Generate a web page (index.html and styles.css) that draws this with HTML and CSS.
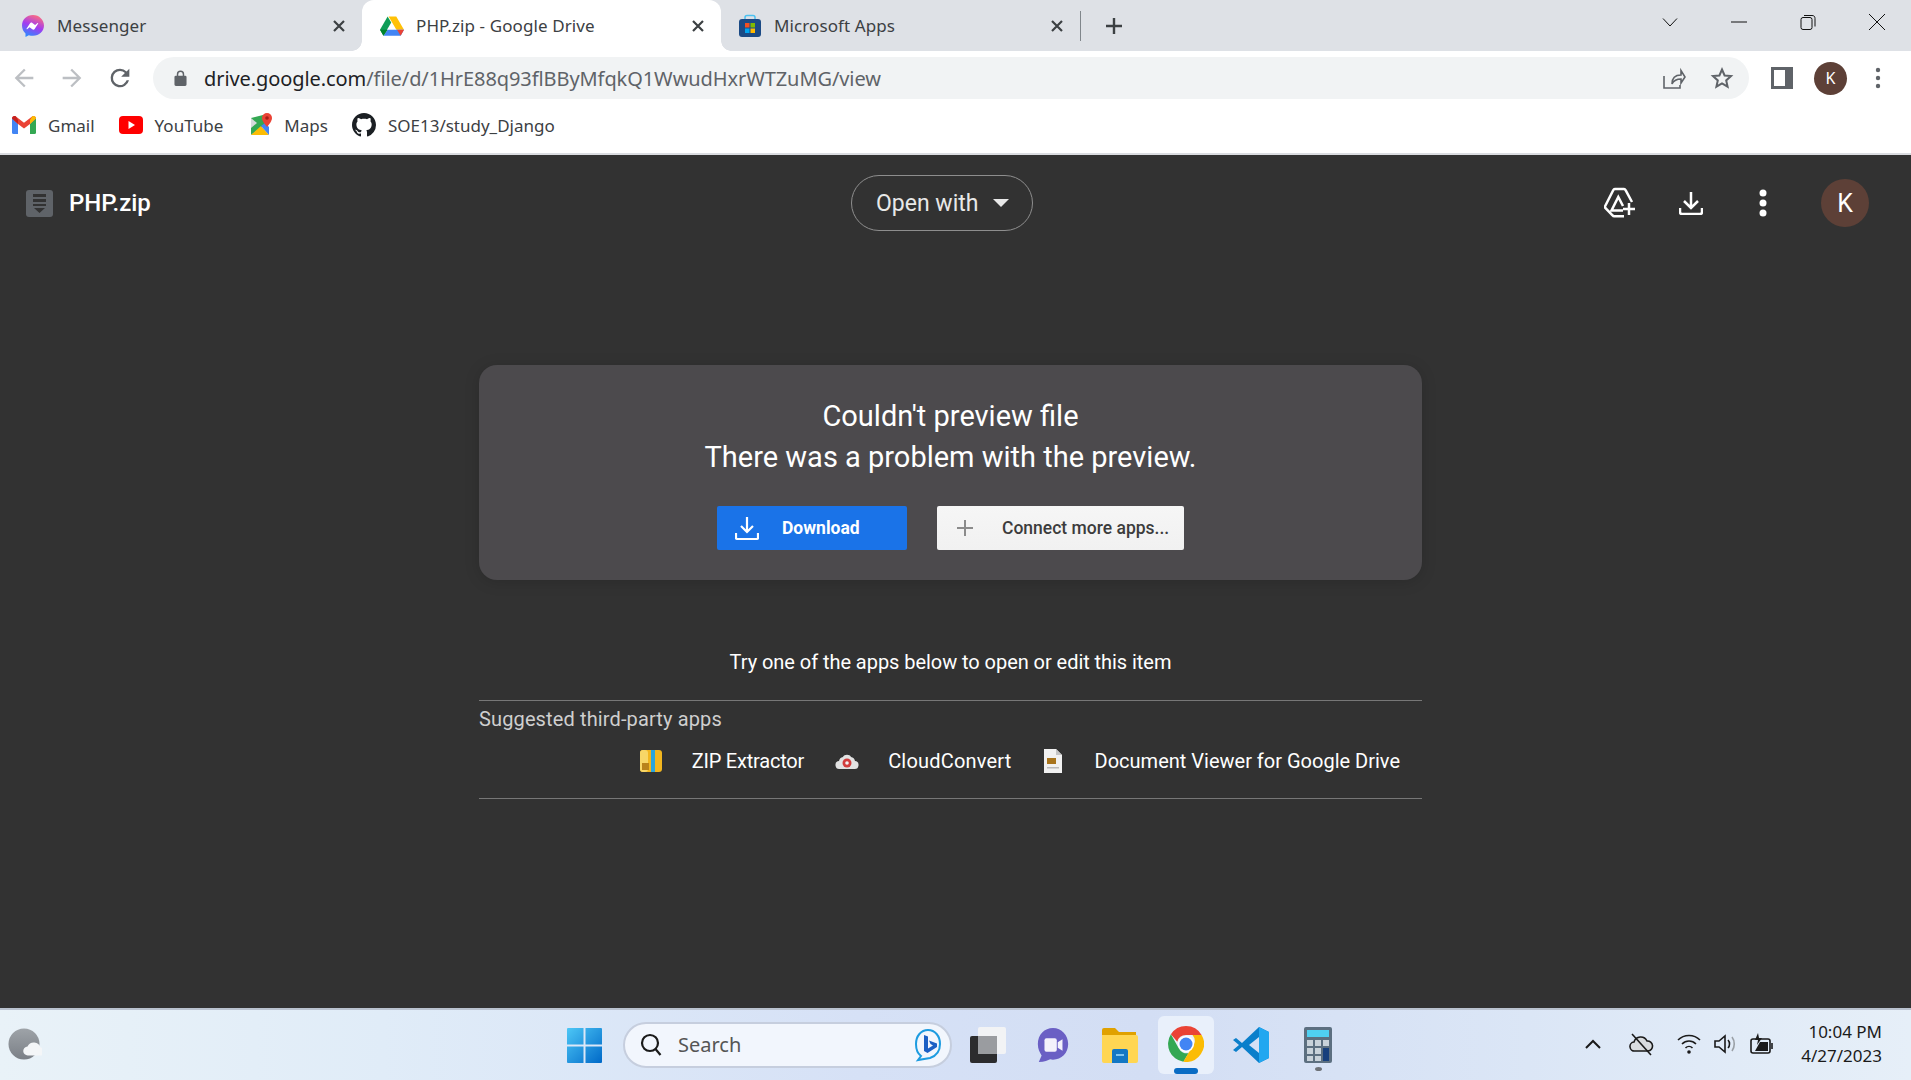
FILE: index.html
```html
<!DOCTYPE html>
<html lang="en">

<head>
    <meta charset="UTF-8">
    <title>PHP.zip - Google Drive</title>
    <link rel="stylesheet" href="styles.css">
</head>

<body>
    <!-- tabs -->
    <div class="tabstrip">
        <div class="tab">
            <svg class="favicon" viewBox="0 0 24 24">
                <defs>
                    <linearGradient id="msg" x1="0.3" y1="1" x2="0.7" y2="0">
                        <stop offset="0" stop-color="#2a8cff" />
                        <stop offset="0.5" stop-color="#a33bf0" />
                        <stop offset="1" stop-color="#ff6f7d" />
                    </linearGradient>
                </defs>
                <path fill="url(#msg)" d="M12 1C5.8 1 1 5.5 1 11.6c0 3.2 1.3 6 3.500 7.900V23l3.300-1.800c1.300.4 2.700.6 4.200.6 6.200 0 11-4.500 11-10.200S18.200 1 12 1z" />
                <path fill="#fff" d="M5.500 14.800l3.400-5.400c.5-.9 1.700-1.100 2.500-.5l2.700 2 2.500-1.900c.3-.3.8.1.6.4l-3.400 5.400c-.5.9-1.700 1.100-2.500.5l-2.700-2-2.500 1.900c-.3.300-.8-.1-.6-.4z" />
            </svg>
            <span class="tab-title">Messenger</span>
            <svg class="tab-close" viewBox="0 0 12 12"><path d="M1 1l10 10M11 1L1 11" /></svg>
        </div>
        <div class="tab tab-active">
            <svg class="favicon" viewBox="1 1 22 20.500">
                <path fill="#0f9d58" d="M8 2.500L1 14.700l3.200 5.600 7.100-12.200z" />
                <path fill="#ffc107" d="M8 2.500h7.900l7.100 12.200h-7l-7.100-12.200z" />
                <path fill="#4285f4" d="M4.200 20.300h15.700l3.100-5.600H8z" />
                <path fill="#ea4335" d="M19.900 20.300l3.100-5.600h-6.400z" />
                <path fill="#00832d" d="M4.200 20.300L8 14.700H1z" />
            </svg>
            <span class="tab-title">PHP.zip - Google Drive</span>
            <svg class="tab-close" viewBox="0 0 12 12"><path d="M1 1l10 10M11 1L1 11" /></svg>
        </div>
        <div class="tab tab-last">
            <svg class="favicon" viewBox="0 0 24 24">
                <path fill="none" stroke="#4cc2f1" stroke-width="1.500" d="M7 6V3.500C7 2 8 1.500 9 1.500h6c1 0 2 .5 2 2V6" />
                <rect x="1" y="5" width="22" height="18" rx="3" fill="#1b4a85" />
                <rect x="7" y="9" width="4.500" height="4.500" fill="#f25022" />
                <rect x="12.500" y="9" width="4.500" height="4.500" fill="#7fba00" />
                <rect x="7" y="14.500" width="4.500" height="4.500" fill="#00a4ef" />
                <rect x="12.500" y="14.500" width="4.500" height="4.500" fill="#ffb900" />
            </svg>
            <span class="tab-title">Microsoft Apps</span>
            <svg class="tab-close" viewBox="0 0 12 12"><path d="M1 1l10 10M11 1L1 11" /></svg>
        </div>
        <div class="tab-sep"></div>
        <svg class="new-tab" viewBox="0 0 18 18"><path d="M9 1v16M1 9h16" /></svg>
        <div class="win-controls">
            <svg class="win-btn" viewBox="0 0 16 16"><path d="M1 4.500l7 7.500 7-7.500" /></svg>
            <svg class="win-btn" viewBox="0 0 16 16"><path d="M0 8h16" /></svg>
            <svg class="win-btn" viewBox="0 0 16 16"><rect x="1" y="3.500" width="11" height="12" rx="2" /><path d="M4 1.500h8c2 0 3 1 3 3v8" /></svg>
            <svg class="win-btn" viewBox="0 0 16 16"><path d="M0 0l16 16M16 0L0 16" /></svg>
        </div>
    </div>

    <!-- address bar -->
    <div class="toolbar">
        <svg class="nav-icon nav-back" viewBox="0 0 24 24"><path fill="#bcbfc3" d="M20 11H7.800l5.600-5.600L12 4l-8 8 8 8 1.400-1.400L7.800 13H20z" /></svg>
        <svg class="nav-icon nav-fwd" viewBox="0 0 24 24"><path fill="#bcbfc3" d="M4 11h12.200l-5.600-5.600L12 4l8 8-8 8-1.400-1.400 5.600-5.600H4z" /></svg>
        <svg class="nav-icon nav-reload" viewBox="0 0 24 24"><path fill="#5f6368" d="M17.650 6.350A7.960 7.960 0 0 0 12 4a8 8 0 1 0 7.730 10h-2.080A6 6 0 1 1 12 6c1.660 0 3.140.69 4.220 1.780L13 11h7V4z" /></svg>
        <div class="omnibox">
            <svg class="lock" viewBox="0 0 14 18"><path fill="#5f6368" d="M12 6h-1V4.500a4 4 0 0 0-8 0V6H2a1.500 1.500 0 0 0-1.500 1.500v8A1.500 1.500 0 0 0 2 17h10a1.500 1.500 0 0 0 1.500-1.500v-8A1.500 1.500 0 0 0 12 6zM4.600 6V4.500a2.400 2.400 0 0 1 4.800 0V6z" /></svg>
            <span class="url"><span class="url-host">drive.google.com</span>/file/d/1HrE88q93flBByMfqkQ1WwudHxrWTZuMG/view</span>
            <svg class="omni-icon omni-share" viewBox="0 0 24 24"><path fill="none" stroke="#5f6368" stroke-width="1.600" d="M2 10v12h16v-3M10 18c0-6 3-9 9-9V4.500l4 6.500-4 6v-4c-4 0-7 1-9 5z" /></svg>
            <svg class="omni-icon omni-star" viewBox="0 0 24 24"><path fill="none" stroke="#5f6368" stroke-width="2" d="M12 3.500l2.600 6 6.400.6-4.800 4.300 1.400 6.300-5.600-3.300-5.600 3.300 1.400-6.300L3 10.100l6.400-.6z" /></svg>
        </div>
        <svg class="side-panel" viewBox="0 0 22 22"><rect width="22" height="22" fill="#5f6368" /><rect x="3" y="3" width="11" height="16" fill="#fff" /></svg>
        <div class="chrome-avatar">K</div>
        <svg class="chrome-menu" viewBox="0 0 6 22"><circle cx="3" cy="3" r="2.200" /><circle cx="3" cy="11" r="2.200" /><circle cx="3" cy="19" r="2.200" /></svg>
    </div>

    <!-- bookmarks -->
    <div class="bookmarks">
        <div class="bookmark bm-gmail">
            <svg class="bm-icon" viewBox="0 0 24 18">
                <path fill="#4285f4" d="M0 2v14.500A1.500 1.500 0 0 0 1.500 18H6V8z" />
                <path fill="#34a853" d="M24 2v14.500a1.500 1.500 0 0 1-1.500 1.500H18V8z" />
                <path fill="#ea4335" d="M0 2.500C0 .5 2.300-.6 3.900.6L12 6.800 20.100.6C21.700-.6 24 .5 24 2.500L18 8l-6 4.500L6 8z" />
                <path fill="#c5221f" d="M0 2.500L6 8V4L3.900.6C2.300-.6 0 .5 0 2.500z" />
                <path fill="#fbbc04" d="M24 2.500L18 8V4L20.100.6c1.600-1.200 3.900-.1 3.900 1.900z" />
            </svg>
            <span>Gmail</span>
        </div>
        <div class="bookmark bm-yt">
            <svg class="bm-icon" viewBox="0 0 24 18"><rect width="24" height="18" rx="4" fill="#f00" /><path fill="#fff" d="M9.500 5l6.500 4-6.500 4z" /></svg>
            <span>YouTube</span>
        </div>
        <div class="bookmark bm-maps">
            <svg class="bm-icon bm-tall" viewBox="0 0 24 24">
                <path fill="#34a853" d="M2 5l12-3 4 8L2 22z" />
                <path fill="#fbbc04" d="M2 22l10-9 8 9z" />
                <path fill="#4285f4" d="M12 13l4-3 4 4v8z" />
                <path fill="#d7dadd" d="M2 5l6 5-6 5z" />
                <path fill="#ea4335" d="M18 0a5 5 0 0 0-5 5c0 3.500 5 9 5 9s5-5.500 5-9a5 5 0 0 0-5-5z" />
                <circle cx="18" cy="5" r="1.800" fill="#a61c14" />
            </svg>
            <span>Maps</span>
        </div>
        <div class="bookmark bm-gh">
            <svg class="bm-icon bm-tall" viewBox="0 0 16 16"><path fill="#1b1f23" d="M8 0C3.580 0 0 3.580 0 8c0 3.540 2.290 6.530 5.470 7.590.4.070.55-.17.55-.38 0-.19-.01-.82-.01-1.490-2.010.37-2.530-.49-2.690-.94-.09-.23-.48-.94-.82-1.130-.28-.15-.68-.52-.01-.53.63-.01 1.080.58 1.230.82.72 1.210 1.870.87 2.330.66.070-.52.28-.87.51-1.070-1.780-.2-3.640-.89-3.640-3.950 0-.87.31-1.590.82-2.150-.08-.2-.36-1.020.08-2.120 0 0 .67-.21 2.200.82.64-.18 1.320-.27 2-.27.68 0 1.360.09 2 .27 1.530-1.040 2.200-.82 2.200-.82.44 1.100.16 1.920.08 2.120.51.56.82 1.270.82 2.150 0 3.070-1.870 3.750-3.650 3.950.29.25.54.73.54 1.480 0 1.070-.01 1.930-.01 2.200 0 .21.15.46.55.38A8.013 8.013 0 0 0 16 8c0-4.420-3.580-8-8-8z" /></svg>
            <span>SOE13/study_Django</span>
        </div>
    </div>

    <!-- drive preview -->
    <div class="viewer">
        <div class="viewer-header">
            <div class="file-name">
                <svg class="zip-icon" viewBox="0 0 27 27">
                    <rect width="27" height="27" rx="3" fill="#5f6368" />
                    <path fill="#323232" d="M7 4h13v3H7zM7 9h13v3H7zM7 14h13v2H7zM8 18h11l-5.500 5z" />
                </svg>
                <span>PHP.zip</span>
            </div>
            <div class="open-with">
                <span>Open with</span>
                <span class="caret"></span>
            </div>
            <div class="viewer-actions">
                <svg class="action add-drive" viewBox="0 0 32 32"><path d="M28 15L21.600 3.200Q21 2 20 2H10.800Q9.800 2 9.200 3.200L1.200 19Q.6 20.200 1.300 21L8.500 28.300Q9.200 29.300 10.200 29.300H20" /><path d="M19 19l-4.700-9-6.800 13.500H19" /><path d="M25 16v12M19 22h12" /></svg>
                <svg class="action dl" viewBox="0 0 24 24"><path d="M12 1v15M5 10l7 7 7-7M1 17v4a2 2 0 0 0 2 2h18a2 2 0 0 0 2-2v-4" /></svg>
                <svg class="action dots" viewBox="0 0 8 28"><circle cx="4" cy="4" r="3.500" /><circle cx="4" cy="14" r="3.500" /><circle cx="4" cy="24" r="3.500" /></svg>
                <div class="drive-avatar">K</div>
            </div>
        </div>

        <div class="preview">
            <div class="error-card">
                <div class="error-title">Couldn't preview file</div>
                <div class="error-title">There was a problem with the preview.</div>
                <div class="error-buttons">
                    <div class="btn btn-primary">
                        <svg class="btn-icon" viewBox="0 0 24 24"><path d="M12 1v15M6 10l6 6 6-6M1 17v5a1 1 0 0 0 1 1h20a1 1 0 0 0 1-1v-5" /></svg>
                        <span>Download</span>
                    </div>
                    <div class="btn btn-light">
                        <svg class="btn-icon" viewBox="0 0 18 18"><path d="M9 1v16M1 9h16" /></svg>
                        <span>Connect more apps...</span>
                    </div>
                </div>
            </div>

            <div class="try-text">Try one of the apps below to open or edit this item</div>

            <div class="suggested">
                <div class="suggested-title">Suggested third-party apps</div>
                <div class="app-row">
                    <div class="app app-zip">
                        <svg class="app-icon" viewBox="0 0 24 24">
                            <rect x="1" y="1" width="22" height="22" rx="3" fill="#f2b61f" />
                            <rect x="1" y="1" width="8" height="22" rx="3" fill="#f7d667" />
                            <rect x="12" y="1" width="4" height="22" fill="#2aa5dc" />
                            <rect x="3" y="14" width="7" height="7" fill="#b9821a" />
                        </svg>
                        <span>ZIP Extractor</span>
                    </div>
                    <div class="app app-cloud">
                        <svg class="app-icon" viewBox="0 0 24 24">
                            <path fill="#e2e2e2" d="M5 20a4 4 0 0 1-1-8 5 5 0 0 1 4-4c1-3 7-3 8 0a5 5 0 0 1 4 4 4 4 0 0 1-1 8z" />
                            <circle cx="12" cy="14" r="4.500" fill="#d23c3c" />
                            <circle cx="12" cy="14" r="1.800" fill="#f3f3f3" />
                        </svg>
                        <span>CloudConvert</span>
                    </div>
                    <div class="app app-doc">
                        <svg class="app-icon app-doc-icon" viewBox="0 0 18 24">
                            <path fill="#f1f1f1" d="M0 0h12l6 6v18H0z" />
                            <path fill="#c4c4c4" d="M12 0l6 6h-6z" />
                            <rect x="3" y="9" width="9" height="6" fill="#a8741c" />
                            <rect x="3" y="18" width="12" height="1.500" fill="#b9b9b9" />
                        </svg>
                        <span>Document Viewer for Google Drive</span>
                    </div>
                </div>
            </div>
        </div>
    </div>

    <!-- windows taskbar -->
    <div class="taskbar">
        <div class="tb-left">
            <svg class="weather" viewBox="0 0 34 34">
                <defs>
                    <linearGradient id="wthr" x1="0" y1="0" x2="0" y2="1">
                        <stop offset="0" stop-color="#9ea3a8" />
                        <stop offset="1" stop-color="#7b8087" />
                    </linearGradient>
                </defs>
                <circle cx="16" cy="16" r="15.500" fill="url(#wthr)" />
                <path fill="#f4f6f8" d="M20 27.500a4.500 4.500 0 0 1-.5-9 7 7 0 0 1 13 1 4 4 0 0 1 0 8z" />
            </svg>
        </div>
        <div class="tb-center">
            <svg class="win-logo" viewBox="0 0 35 35">
                <defs>
                    <linearGradient id="winb" x1="0" y1="0" x2="1" y2="1">
                        <stop offset="0" stop-color="#4dc7f6" />
                        <stop offset="1" stop-color="#0069c8" />
                    </linearGradient>
                </defs>
                <path fill="url(#winb)" d="M0 1a1 1 0 0 1 1-1h15.500v16.500H0zM18.500 0H34a1 1 0 0 1 1 1v15.500H18.500zM0 18.500h16.500V35H1a1 1 0 0 1-1-1zM18.500 18.500H35V34a1 1 0 0 1-1 1H18.500z" />
            </svg>
            <div class="search-pill">
                <svg class="search-glass" viewBox="0 0 22 24"><circle cx="10" cy="10" r="8" /><path d="M15.500 16l5 6" /></svg>
                <span class="search-text">Search</span>
                <svg class="bing" viewBox="0 0 28 34">
                    <path fill="none" stroke="#1c9be0" stroke-width="2" d="M14 2c7 0 12 6 12 14s-4 12-10 14l-12 2 3-4C3 25 2 21 2 16 2 8 7 2 14 2z" />
                    <path fill="#1b5fc4" d="M10 7l4 1.500v12l5-3-2.500-1.500-1.500-3.500 8 3v3.500l-9.500 6-3.500-2z" />
                </svg>
            </div>
            <svg class="tb-icon taskview" viewBox="0 0 36 36">
                <rect x="8" y="0" width="28" height="27" rx="2" fill="#f2f3f5" />
                <rect x="0" y="9" width="27" height="27" rx="2" fill="#2c2c2e" />
                <rect x="8" y="9" width="19" height="18" fill="#9a9ca0" />
            </svg>
            <svg class="tb-icon teams" viewBox="0 0 34 38">
                <path fill="#6a5fc4" d="M17 1C8 1 1 8 1 18c0 5 2 9 4 12l-3 7c6 0 10-2 12-3 1 0 2 .5 3 .5 9 0 16-7 16-16.500S26 1 17 1z" />
                <rect x="8" y="12" width="13" height="14" rx="2" fill="#f3f1fb" />
                <path fill="#f3f1fb" d="M22 16l5-3v12l-5-3z" />
            </svg>
            <svg class="tb-icon folder" viewBox="0 0 36 36">
                <path fill="#e0a100" d="M0 3a2 2 0 0 1 2-2h11l4 4h17v8H0z" />
                <path fill="#ffd653" d="M0 8h34a2 2 0 0 1 2 2v24a2 2 0 0 1-2 2H2a2 2 0 0 1-2-2z" />
                <path fill="#1277c4" d="M10 24a2 2 0 0 1 2-2h12a2 2 0 0 1 2 2v12H10z" />
                <rect x="14" y="27" width="8" height="2" fill="#7dc3ef" />
            </svg>
            <div class="tb-active">
                <svg class="chrome-logo" viewBox="0 0 36 36">
                    <path fill="#ea4335" d="M18 0a18 18 0 0 1 15.600 9H18a9 9 0 0 0-8.700 6.700L2.900 8.300A18 18 0 0 1 18 0z" />
                    <path fill="#34a853" d="M2.900 8.300l7.800 14a9 9 0 0 0 10 4.800L15.400 35.800A18 18 0 0 1 2.900 8.300z" />
                    <path fill="#fbbc04" d="M33.600 9A18 18 0 0 1 15.400 35.800l7.800-13.600A9 9 0 0 0 24.500 9z" />
                    <circle cx="18" cy="18" r="8" fill="#fff" />
                    <circle cx="18" cy="18" r="6.500" fill="#4285f4" />
                </svg>
                <div class="tb-indicator"></div>
            </div>
            <svg class="tb-icon vscode" viewBox="0 0 36 36">
                <path fill="#0a7fcb" d="M26 0l10 5v26l-10 5L9 20l-6 5-3-2 6-5-6-5 3-2 6 5z" />
                <path fill="#22a7f0" d="M26 0l10 5v26l-10 5z" />
                <path fill="#d5e1f6" d="M26 10v16l-10-8z" />
            </svg>
            <div class="tb-calc">
                <svg class="calc-icon" viewBox="0 0 28 36">
                    <rect width="28" height="36" rx="2" fill="#5c6f80" />
                    <rect x="3" y="3" width="22" height="7" fill="#4fd0f2" />
                    <g fill="#c8d2da">
                        <rect x="3" y="13" width="6" height="6" /><rect x="11" y="13" width="6" height="6" /><rect x="19" y="13" width="6" height="6" />
                        <rect x="3" y="21" width="6" height="6" /><rect x="11" y="21" width="6" height="6" />
                        <rect x="3" y="29" width="6" height="5" /><rect x="11" y="29" width="6" height="5" />
                    </g>
                    <rect x="19" y="21" width="6" height="13" fill="#173f7c" />
                </svg>
                <div class="tb-dot"></div>
            </div>
        </div>
        <div class="tray">
            <svg class="tray-icon tray-chevron" viewBox="0 0 16 10"><path d="M1 9l7-7 7 7" /></svg>
            <svg class="tray-icon tray-cloud" viewBox="0 0 25 24"><path d="M6 19a4.500 4.500 0 0 1-1-9 7 7 0 0 1 13-1 5 5 0 0 1 1 10z" fill="#d9dcdf" /><path d="M3 2l19 21" /></svg>
            <svg class="tray-icon tray-wifi" viewBox="0 0 24 22"><path d="M1 7c6-6 16-6 22 0M5 11c4-4 10-4 14 0M8.500 15c2-2 5-2 7 0" /><circle cx="12" cy="19" r="1.800" fill="#1a1a1a" stroke="none" /></svg>
            <svg class="tray-icon tray-sound" viewBox="0 0 24 24"><path d="M2 9v6h4l6 5V4L6 9z" /><path d="M15 8c2 2 2 6 0 8" /><path class="faint" d="M19 5c3 4 3 10 0 14" /></svg>
            <svg class="tray-icon tray-battery" viewBox="0 0 24 24"><rect x="1" y="7" width="19" height="14" rx="2" /><path d="M22 11v6" /><path fill="#1a1a1a" stroke="none" d="M10 10h8v9H5zM8 1L5 8h3l-1 5 5-7H9z" /></svg>
            <div class="clock">
                <div>10:04 PM</div>
                <div>4/27/2023</div>
            </div>
        </div>
    </div>
</body>

</html>
```

FILE: styles.css
```css
* {
    box-sizing: border-box;
}

html,
body {
    margin: 0;
    height: 100%;
}

body {
    width: 1911px;
    height: 1080px;
    overflow: hidden;
    display: flex;
    flex-direction: column;
    font-family: 'Noto Sans', sans-serif;
    background-color: #323232;
}

svg {
    display: block;
    flex-shrink: 0;
}

/* tab strip */
.tabstrip {
    height: 51px;
    background-color: #dee1e6;
    display: flex;
    align-items: center;
}

.tab {
    width: 362px;
    height: 51px;
    display: flex;
    align-items: center;
    padding-left: 21px;
    position: relative;
}

.tab-active {
    width: 359px;
    background-color: #fff;
    border-radius: 12px 12px 0 0;
    padding-left: 18px;
}

.tab-active::before,
.tab-active::after {
    content: "";
    position: absolute;
    bottom: 0;
    width: 10px;
    height: 10px;
    background: radial-gradient(circle at 0 0, #dee1e6 9.5px, #fff 10px);
}

.tab-active::before {
    left: -10px;
}

.tab-active::after {
    right: -10px;
    background: radial-gradient(circle at 100% 0, #dee1e6 9.5px, #fff 10px);
}

.tab-last {
    width: 359px;
    padding-left: 17px;
}

.favicon {
    width: 24px;
    height: 24px;
}

.tab-title {
    font-size: 17px;
    color: #3c4043;
    margin-left: 12px;
    flex: 1;
    letter-spacing: 0.1px;
}

.tab-close {
    width: 12px;
    height: 12px;
    margin-right: 17px;
    fill: none;
    stroke: #3c4043;
    stroke-width: 2.200;
}

.tab-sep {
    width: 1px;
    height: 30px;
    background-color: #80868b;
}

.new-tab {
    width: 18px;
    height: 18px;
    margin-left: 24px;
    fill: none;
    stroke: #3c4043;
    stroke-width: 2.400;
}

.win-controls {
    margin-left: auto;
    display: flex;
    align-items: center;
    gap: 53px;
    padding-right: 26px;
    margin-top: -7px;
}

.win-btn {
    width: 16px;
    height: 16px;
    fill: none;
    stroke: #111;
    stroke-width: 1;
}

/* toolbar */
.toolbar {
    height: 51px;
    background-color: #fff;
    display: flex;
    align-items: center;
}

.nav-icon {
    width: 28px;
    height: 28px;
    margin-top: 2px;
}

.nav-back {
    margin-left: 10px;
}

.nav-fwd {
    margin-left: 20px;
}

.nav-reload {
    margin-left: 20px;
}

.omnibox {
    width: 1596px;
    height: 42px;
    margin-left: 19px;
    margin-top: 3px;
    background-color: #f1f3f4;
    border-radius: 21px;
    display: flex;
    align-items: center;
    padding-left: 21px;
}

.lock {
    width: 13px;
    height: 17px;
}

.url {
    margin-left: 17px;
    font-size: 20px;
    color: #5f6368;
    letter-spacing: -0.08px;
}

.url-host {
    color: #202124;
}

.omni-icon {
    width: 24px;
    height: 24px;
}

.omni-share {
    margin-left: auto;
}

.omni-star {
    margin-left: 24px;
    margin-right: 15px;
}

.side-panel {
    width: 22px;
    height: 22px;
    margin-left: 22px;
    margin-top: 3px;
}

.chrome-avatar {
    width: 33px;
    height: 33px;
    margin-left: 21px;
    margin-top: 3px;
    border-radius: 50%;
    background-color: #5d4037;
    color: #fff;
    font-size: 16px;
    display: flex;
    align-items: center;
    justify-content: center;
}

.chrome-menu {
    width: 6px;
    height: 22px;
    margin-left: 28px;
    margin-top: 3px;
    fill: #5f6368;
}

/* bookmarks */
.bookmarks {
    height: 53px;
    background-color: #fff;
    border-bottom: 2px solid #dadce0;
    display: flex;
    align-items: center;
    padding: 0 0 5px 12px;
}

.bookmark {
    display: flex;
    align-items: center;
    font-size: 17px;
    color: #3c4043;
}

.bm-icon {
    width: 24px;
    height: 18px;
}

.bm-tall {
    height: 24px;
}

.bookmark span {
    margin-left: 12px;
}

.bm-yt {
    margin-left: 24px;
}

.bm-maps {
    margin-left: 26px;
}

.bm-maps span {
    margin-left: 11px;
}

.bm-gh {
    margin-left: 24px;
}

/* drive viewer */
.viewer {
    flex: 1;
    background-color: #323232;
    font-family: Roboto, sans-serif;
}

.viewer-header {
    height: 96px;
    display: grid;
    grid-template-columns: 851px 182px 1fr;
    align-items: center;
}

.file-name {
    display: flex;
    align-items: center;
    padding-left: 26px;
    font-size: 24px;
    font-weight: 500;
    color: #fff;
}

.zip-icon {
    width: 27px;
    height: 27px;
    margin-right: 16px;
}

.open-with {
    height: 56px;
    border: 1px solid #8e8e8e;
    border-radius: 28px;
    display: flex;
    align-items: center;
    padding-left: 24px;
    font-size: 23px;
    color: #e8e8e8;
}

.caret {
    width: 0;
    height: 0;
    margin-left: 15px;
    border-left: 8px solid transparent;
    border-right: 8px solid transparent;
    border-top: 8px solid #e8e8e8;
}

.viewer-actions {
    display: flex;
    align-items: center;
}

.action {
    fill: none;
    stroke: #fff;
    stroke-width: 2.500;
}

.add-drive {
    width: 32px;
    height: 32px;
    margin-left: 571px;
}

.dl {
    width: 24px;
    height: 24px;
    margin-left: 43px;
}

.dots {
    width: 8px;
    height: 28px;
    margin-left: 56px;
    fill: #fff;
    stroke: none;
}

.drive-avatar {
    width: 48px;
    height: 48px;
    margin-left: 54px;
    border-radius: 50%;
    background-color: #5d4037;
    color: #fff;
    font-size: 25px;
    display: flex;
    align-items: center;
    justify-content: center;
}

.preview {
    width: 943px;
    margin: 114px 0 0 479px;
}

.error-card {
    height: 215px;
    padding-top: 31px;
    background-color: #4c4a4d;
    border-radius: 18px;
    box-shadow: 0 2px 15px rgba(0, 0, 0, 0.15);
    text-align: center;
}

.error-title {
    font-size: 29px;
    line-height: 41px;
    color: #fff;
}

.error-buttons {
    display: flex;
    justify-content: center;
    gap: 30px;
    margin-top: 28px;
}

.btn {
    height: 44px;
    border-radius: 2px;
    display: flex;
    align-items: center;
    font-size: 17.5px;
    font-weight: 500;
}

.btn-primary {
    width: 190px;
    background-color: #1a73e8;
    color: #fff;
    padding-left: 18px;
    font-weight: 700;
}

.btn-primary .btn-icon {
    width: 24px;
    height: 26px;
    margin-right: 23px;
    fill: none;
    stroke: #fff;
    stroke-width: 2.200;
}

.btn-light {
    width: 247px;
    background: linear-gradient(#f6f6f6, #f1f1f1);
    color: #3c3c3c;
    padding-left: 19px;
}

.btn-light .btn-icon {
    width: 18px;
    height: 18px;
    margin-right: 28px;
    fill: none;
    stroke: #8b8b8b;
    stroke-width: 2;
}

.try-text {
    margin-top: 68px;
    font-size: 20px;
    line-height: 28px;
    color: #fff;
    text-align: center;
    letter-spacing: -0.05px;
}

.suggested {
    margin-top: 24px;
    height: 99px;
    border-top: 1px solid #777;
    border-bottom: 1px solid #777;
    display: flex;
    flex-direction: column;
}

.suggested-title {
    font-size: 20px;
    line-height: 28px;
    padding-top: 4px;
    color: #cfcfcf;
    letter-spacing: 0.13px;
}

.app-row {
    display: flex;
    justify-content: flex-end;
    align-items: center;
    padding: 14px 22px 0 0;
    font-size: 20px;
    line-height: 28px;
    color: #fff;
}

.app {
    display: flex;
    align-items: center;
    margin-left: 31px;
}

.app-zip {
    letter-spacing: -0.2px;
}

.app-cloud {
    letter-spacing: 0.2px;
}

.app-doc {
    margin-left: 32px;
}

.app-icon {
    width: 24px;
    height: 24px;
    margin-right: 29px;
}

.app-doc-icon {
    width: 18px;
    margin-right: 33px;
}

/* taskbar */
.taskbar {
    height: 72px;
    display: flex;
    align-items: center;
    border-top: 2px solid #b9c2cf;
    background: linear-gradient(90deg, #e9f2f8 0%, #e0ecf8 20%, #d6e1f6 45%, #d3def4 60%, #dbe6f6 80%, #e6eff8 100%);
}

.tb-left {
    width: 567px;
    padding-left: 8px;
}

.weather {
    width: 34px;
    height: 34px;
}

.tb-center {
    display: flex;
    align-items: center;
}

.win-logo {
    width: 35px;
    height: 35px;
}

.search-pill {
    width: 329px;
    height: 46px;
    margin-left: 21px;
    background-color: #f2f6fd;
    border: 2px solid #c6cede;
    border-radius: 23px;
    display: flex;
    align-items: center;
    padding-left: 15px;
}

.search-glass {
    width: 22px;
    height: 24px;
    fill: none;
    stroke: #1a1a1a;
    stroke-width: 2.200;
}

.search-text {
    margin-left: 16px;
    margin-top: -2px;
    font-size: 20px;
    color: #555;
    font-family: 'Noto Sans', sans-serif;
}

.bing {
    width: 28px;
    height: 34px;
    margin-left: auto;
    margin-right: 8px;
}

.tb-icon {
    width: 36px;
    height: 36px;
}

.taskview {
    margin-left: 18px;
}

.teams {
    width: 34px;
    margin-left: 30px;
}

.folder {
    margin-left: 32px;
}

.tb-active {
    width: 56px;
    height: 58px;
    margin-left: 20px;
    background-color: #e9f0fb;
    border-radius: 6px;
    display: flex;
    flex-direction: column;
    align-items: center;
    padding-top: 10px;
}

.chrome-logo {
    width: 36px;
    height: 36px;
}

.tb-indicator {
    width: 24px;
    height: 6px;
    margin-top: 6px;
    border-radius: 3px;
    background-color: #0a6cc4;
}

.vscode {
    margin-left: 19px;
}

.tb-calc {
    margin-left: 35px;
    width: 28px;
    height: 44px;
    display: flex;
    flex-direction: column;
    align-items: center;
    margin-top: 8px;
}

.calc-icon {
    width: 28px;
    height: 36px;
}

.tb-dot {
    width: 7px;
    height: 7px;
    margin-top: 4px;
    border-radius: 50%;
    background-color: #6e7278;
}

.tray {
    margin-left: auto;
    display: flex;
    align-items: center;
    padding-right: 29px;
    margin-top: -2px;
}

.tray-icon {
    fill: none;
    stroke: #1a1a1a;
    stroke-width: 1.600;
    width: 24px;
    height: 24px;
}

.tray-chevron {
    width: 16px;
    height: 10px;
    stroke-width: 2;
}

.tray-cloud {
    width: 25px;
    margin-left: 28px;
}

.tray-wifi {
    margin-left: 23px;
}

.tray-sound {
    margin-left: 12px;
}

.faint {
    stroke: #9aa0a6;
}

.tray-battery {
    margin-left: 13px;
}

.clock {
    width: 108px;
    text-align: right;
    font-size: 17px;
    line-height: 24px;
    color: #1a1a1a;
}
```
